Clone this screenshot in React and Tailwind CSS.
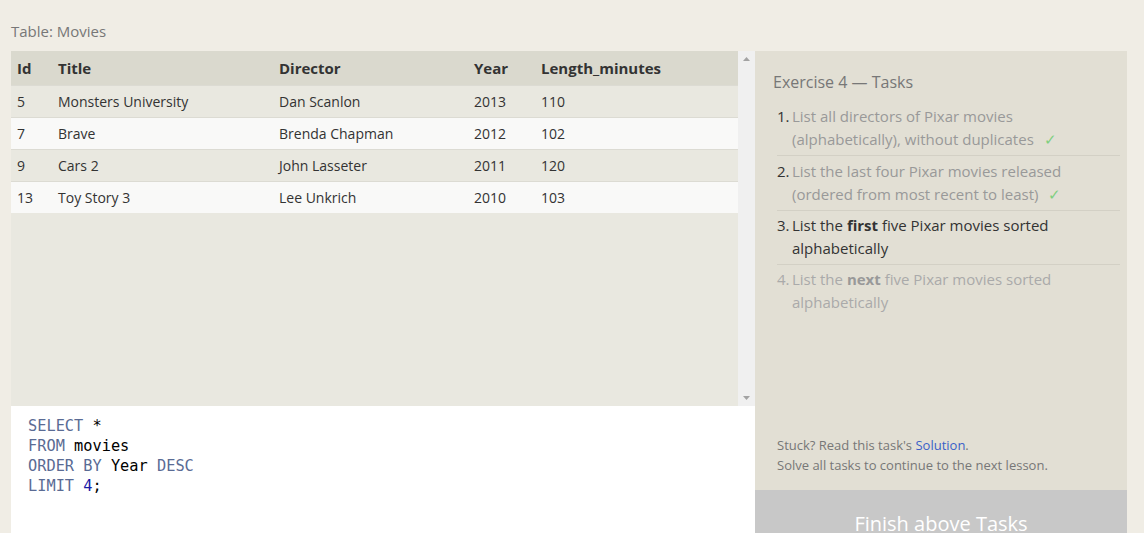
import React from "react";

const rows = [
  ["5", "Monsters University", "Dan Scanlon", "2013", "110"],
  ["7", "Brave", "Brenda Chapman", "2012", "102"],
  ["9", "Cars 2", "John Lasseter", "2011", "120"],
  ["13", "Toy Story 3", "Lee Unkrich", "2010", "103"],
];

function Check() {
  return <span className="ml-[10px] text-[#7fcf7f]">✓</span>;
}

export default function App() {
  return (
    <div
      className="w-[1144px] h-[533px] overflow-hidden bg-[#f0ede5] text-[#333]"
      style={{ fontFamily: '"Open Sans", "Noto Sans", sans-serif' }}
    >
      <div className="h-[51px] pl-[11px] pt-[21px] text-[15px] leading-[20px] text-[#777]">
        Table: Movies
      </div>
      <div className="flex ml-[11px] mr-[17px] h-[482px]">
        <div className="flex flex-col w-[744px]">
          <div className="flex h-[355px] bg-[#e9e8e0]">
            <div className="flex-1">
              <div className="flex h-[34px] items-center bg-[#dad9ce] font-bold text-[15px]">
                <div className="w-[47px] pl-[6px]">Id</div>
                <div className="w-[221px]">Title</div>
                <div className="w-[195px]">Director</div>
                <div className="w-[67px]">Year</div>
                <div className="flex-1">Length_minutes</div>
              </div>
              {rows.map((r, i) => (
                <div
                  key={i}
                  className={`flex h-[32px] items-center text-[14px] border-t border-[#dcdbd3] ${
                    i % 2 === 0 ? "bg-[#e9e8e0]" : "bg-[#f9f9f8]"
                  }`}
                >
                  <div className="w-[47px] pl-[6px]">{r[0]}</div>
                  <div className="w-[221px]">{r[1]}</div>
                  <div className="w-[195px]">{r[2]}</div>
                  <div className="w-[67px]">{r[3]}</div>
                  <div className="flex-1">{r[4]}</div>
                </div>
              ))}
            </div>
            <div className="w-[17px] bg-[#f0f0f0] flex flex-col items-center justify-between py-[6px]">
              <svg width="7" height="4" viewBox="0 0 7 4">
                <path d="M0 4 L3.5 0 L7 4 Z" fill="#a3a3a3" />
              </svg>
              <svg width="7" height="4" viewBox="0 0 7 4">
                <path d="M0 0 L3.5 4 L7 0 Z" fill="#a3a3a3" />
              </svg>
            </div>
          </div>
          <div
            className="flex-1 bg-white pl-[17px] pt-[10px] text-[15.3px] leading-[20px] text-black"
            style={{ fontFamily: '"DejaVu Sans Mono", monospace' }}
          >
            <div>
              <span className="text-[#5a6b94]">SELECT</span> *
            </div>
            <div>
              <span className="text-[#5a6b94]">FROM</span> movies
            </div>
            <div>
              <span className="text-[#5a6b94]">ORDER BY</span> Year{" "}
              <span className="text-[#5a6b94]">DESC</span>
            </div>
            <div>
              <span className="text-[#5a6b94]">LIMIT</span>{" "}
              <span className="text-[#1a1aa6]">4</span>;
            </div>
          </div>
        </div>
        <div className="flex flex-col flex-1 bg-[#e2dfd4]">
          <div className="px-[18px] pt-[20px] text-[16px] leading-[22px] text-[#777]">
            Exercise 4 — Tasks
          </div>
          <ol className="mt-[12px] pl-[22px] pr-[7px] text-[15px] leading-[23px]">
            <li className="flex pb-[4px] border-b border-[#d3d0c5]">
              <span className="w-[15px] text-[#333]">1.</span>
              <span className="text-[#999]">
                List all directors of Pixar movies
                <br />
                (alphabetically), without duplicates
                <Check />
              </span>
            </li>
            <li className="flex pt-[4px] pb-[4px] border-b border-[#d3d0c5]">
              <span className="w-[15px] text-[#333]">2.</span>
              <span className="text-[#999]">
                List the last four Pixar movies released
                <br />
                (ordered from most recent to least)
                <Check />
              </span>
            </li>
            <li className="flex pt-[3px] pb-[4px] border-b border-[#d3d0c5]">
              <span className="w-[15px] text-[#333]">3.</span>
              <span className="text-[#333]">
                List the <b>first</b> five Pixar movies sorted
                <br />
                alphabetically
              </span>
            </li>
            <li className="flex pt-[3px] text-[#aaa]">
              <span className="w-[15px]">4.</span>
              <span>
                List the <b className="text-[#999]">next</b> five Pixar movies sorted
                <br />
                alphabetically
              </span>
            </li>
          </ol>
          <div className="mt-auto px-[22px] pb-[15px] text-[13px] leading-[20px] text-[#777]">
            <div>
              Stuck? Read this task's <span className="text-[#3a5fc8]">Solution</span>.
            </div>
            <div>Solve all tasks to continue to the next lesson.</div>
          </div>
          <div className="h-[43px] bg-[#c8c8c8] text-white text-[20px] text-center pt-[20px] leading-[28px] overflow-hidden">
            Finish above Tasks
          </div>
        </div>
      </div>
    </div>
  );
}
